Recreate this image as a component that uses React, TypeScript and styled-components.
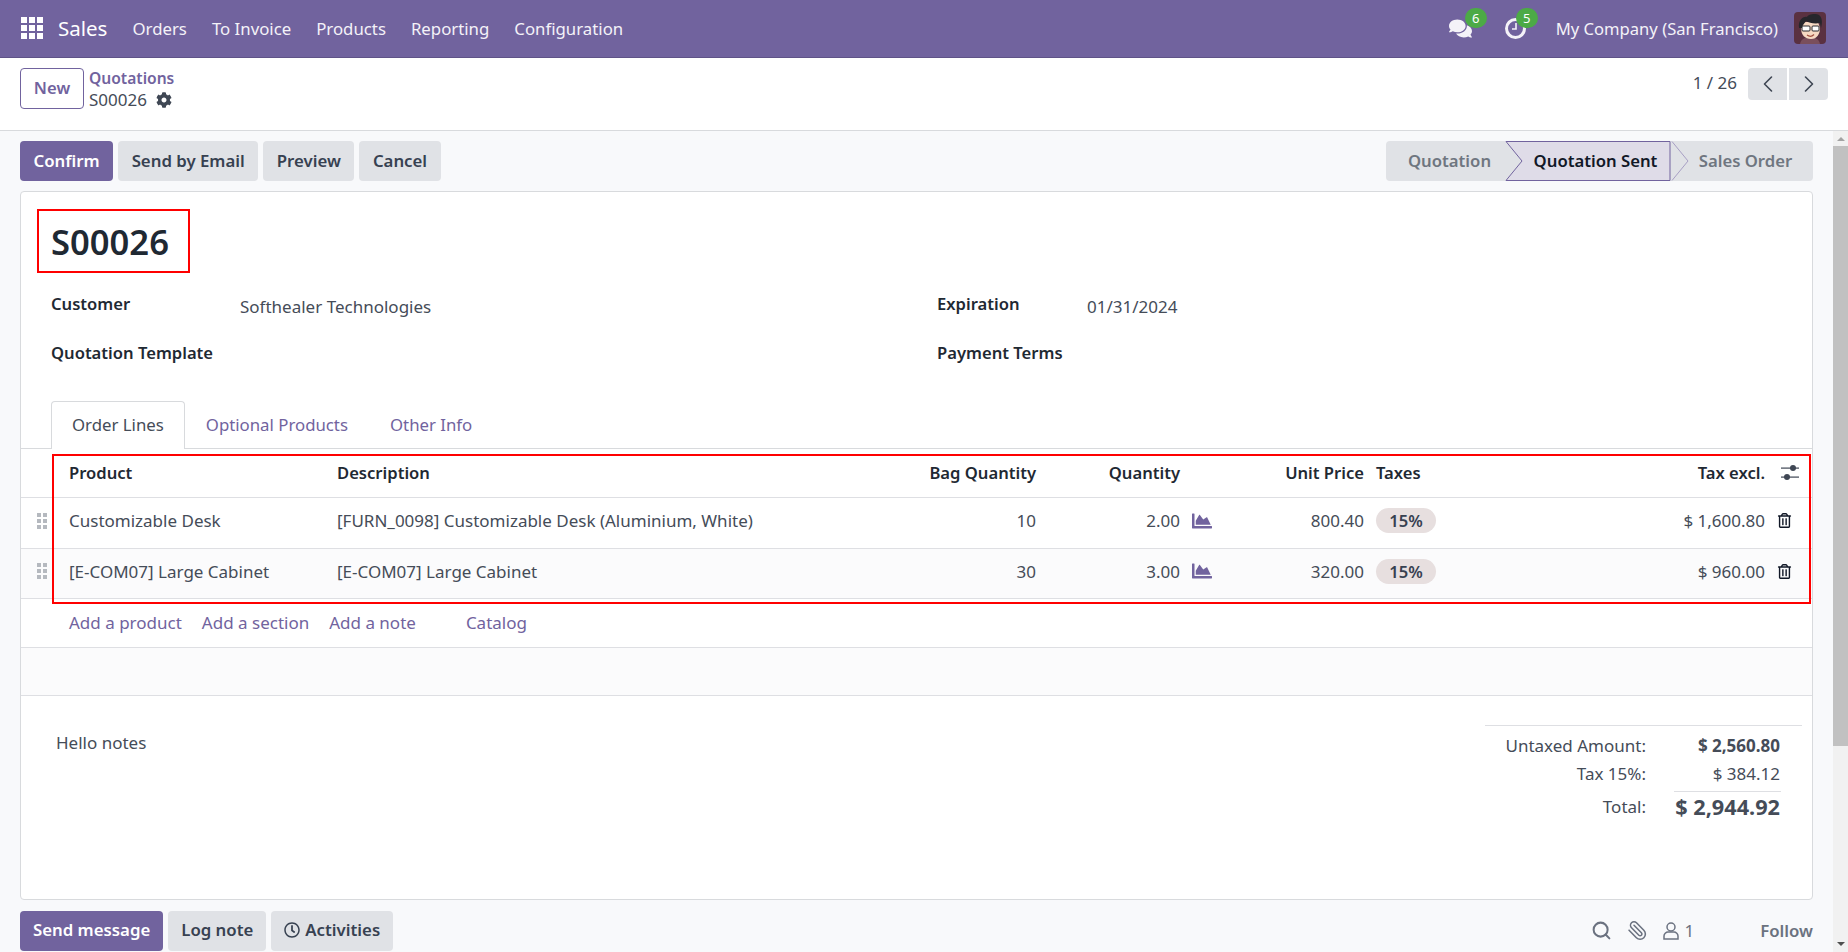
import React from 'react'
import styled, { createGlobalStyle } from 'styled-components'
import { FaChartArea, FaCog, FaComments, FaRegClock, FaRegTrashAlt } from 'react-icons/fa'
import { ChevronLeft, ChevronRight, Paperclip, Search } from 'lucide-react'

const font = `"Noto Sans", "Open Sans", sans-serif`

const GlobalStyle = createGlobalStyle`
  html, body { margin: 0; padding: 0; height: 100%; overflow: hidden; }
  body { font-family: ${font}; font-size: 17px; color: #454c58; background: #f8f9fb; }
  * { box-sizing: border-box; }
`

const Page = styled.div`
  width: 1848px;
  height: 952px;
  display: flex;
  flex-direction: column;
  overflow: hidden;
`
const Navbar = styled.header`
  height: 58px;
  flex: none;
  background: #71639e;
  border-bottom: 1px solid #5f5387;
  color: #fff;
  display: flex;
  align-items: center;
  padding: 0 22px 1px 21px;
`
const AppsIcon = styled.svg`
  width: 22px;
  height: 22px;
  fill: #fff;
  margin-right: 15px;
`
const Brand = styled.span`
  font-size: 20.5px;
  margin-right: 25px;
`
const MenuItem = styled.span`
  font-size: 16.8px;
  margin-right: 25px;
  color: #f4f2f8;
`
const NavRight = styled.div`
  margin-left: auto;
  display: flex;
  align-items: center;
`
const NavIcon = styled.span<{ $gap: number }>`
  position: relative;
  display: flex;
  font-size: 23px;
  margin-right: ${({ $gap }) => $gap}px;
  color: #f4f2f8;
`
const Badge = styled.span<{ $left: number }>`
  position: absolute;
  top: -9px;
  left: ${({ $left }) => $left}px;
  width: 22px;
  height: 20px;
  border-radius: 10px;
  background: #4caa46;
  color: #fff;
  font-size: 13px;
  display: flex;
  align-items: center;
  justify-content: center;
`
const Company = styled.span`
  font-size: 16.6px;
  margin: 0 16px 0 0;
  color: #f4f2f8;
`
const Avatar = styled.svg`
  width: 32px;
  height: 32px;
  border-radius: 4px;
`

const ControlPanel = styled.div`
  height: 73px;
  flex: none;
  background: #fff;
  border-bottom: 1px solid #d8dadd;
  display: flex;
  padding: 10px 20px 0;
`
const NewButton = styled.button`
  all: unset;
  box-sizing: border-box;
  width: 64px;
  height: 41px;
  padding-bottom: 3px;
  border: 1px solid #71639e;
  border-radius: 4px;
  color: #71639e;
  font-size: 16.6px;
  font-weight: 600;
  display: flex;
  align-items: center;
  justify-content: center;
`
const Breadcrumb = styled.div`
  margin-left: 5px;
  display: flex;
  flex-direction: column;
  line-height: 21px;
`
const CrumbLink = styled.span`
  color: #71639e;
  font-size: 15.6px;
  font-weight: 600;
`
const CrumbCurrent = styled.span`
  display: flex;
  align-items: center;
  gap: 9px;
  svg { font-size: 16px; color: #3f4754; }
`
const Pager = styled.div`
  margin-left: auto;
  display: flex;
  align-items: flex-start;
`
const PagerText = styled.span`
  line-height: 29px;
  margin-right: 11px;
`
const PagerButton = styled.button<{ $side: 'left' | 'right' }>`
  all: unset;
  width: 39px;
  height: 32px;
  background: #e0e2e6;
  color: #3f4754;
  display: flex;
  align-items: center;
  justify-content: center;
  margin-left: ${({ $side }) => ($side === 'right' ? '2px' : '0')};
  border-radius: ${({ $side }) => ($side === 'left' ? '4px 0 0 4px' : '0 4px 4px 0')};
`

const Workspace = styled.div`
  flex: 1;
  display: flex;
  min-height: 0;
`
const Content = styled.main`
  flex: 1;
  padding: 10px 20px 0;
  min-width: 0;
`
const ActionBar = styled.div`
  display: flex;
  gap: 5px;
  height: 40px;
`
const Btn = styled.button<{ $primary?: boolean }>`
  all: unset;
  box-sizing: border-box;
  height: 40px;
  padding: 0 13.5px 2px;
  border-radius: 4px;
  font-size: 16.8px;
  font-weight: 600;
  display: flex;
  align-items: center;
  gap: 5px;
  background: ${({ $primary }) => ($primary ? '#71639e' : '#e0e2e6')};
  color: ${({ $primary }) => ($primary ? '#fff' : '#374151')};
`
const ChatterBtn = styled(Btn)`
  padding: 0 13px 2px;
`
const StatusBar = styled.div`
  margin-left: auto;
  width: 427px;
  height: 40px;
  background: #e0e2e6;
  border-radius: 4px;
  display: grid;
  grid-template-columns: 119px 165px 1fr;
  position: relative;
  font-size: 16.7px;
  font-weight: 600;
  color: #6f7680;
`
const StatusStep = styled.span<{ $pad: number; $active?: boolean }>`
  position: relative;
  display: flex;
  align-items: center;
  justify-content: center;
  padding: 0 0 2px ${({ $pad }) => $pad}px;
  color: ${({ $active }) => ($active ? '#111827' : 'inherit')};
`
const StatusShape = styled.svg`
  position: absolute;
  left: 119px;
  top: 0;
  width: 184px;
  height: 40px;
`

const Sheet = styled.section`
  margin-top: 10px;
  height: 709px;
  background: #fff;
  border: 1px solid #d8dadd;
  border-radius: 4px;
  padding-top: 17px;
`
const TitleBox = styled.div`
  margin-left: 16px;
  width: 153px;
  height: 64px;
  border: 2px solid #f00;
  padding-left: 12px;
  display: flex;
  align-items: center;
  font-size: 34.6px;
  font-weight: 600;
  color: #1f2933;
`
const FormGrid = styled.div`
  display: grid;
  grid-template-columns: 189px 697px 150px 1fr;
  grid-auto-rows: 49px;
  margin: 8px 0 0 30px;
`
const FieldLabel = styled.span`
  font-size: 16.6px;
  font-weight: 600;
  color: #1f2933;
  padding-top: 11px;
`
const FieldValue = styled.span`
  padding-top: 14px;
`
const Tabs = styled.div`
  margin-top: 22px;
  height: 48px;
  padding-left: 30px;
  border-bottom: 1px solid #d8dadd;
  display: flex;
`
const Tab = styled.span<{ $active?: boolean }>`
  height: ${({ $active }) => ($active ? '48px' : '47px')};
  padding: 0 20px 2px;
  font-size: 16.8px;
  display: flex;
  align-items: center;
  color: ${({ $active }) => ($active ? '#454c58' : '#71639e')};
  background: #fff;
  border: 1px solid ${({ $active }) => ($active ? '#d8dadd' : 'transparent')};
  border-bottom: none;
  border-radius: 4px 4px 0 0;
`
const TableWrap = styled.div`
  position: relative;
`
const RedBox = styled.div`
  position: absolute;
  left: 31px;
  right: 1px;
  top: 5px;
  height: 150px;
  border: 2px solid #f00;
  pointer-events: none;
`
const Row = styled.div<{ $height: number; $shade?: boolean; $head?: boolean }>`
  display: grid;
  grid-template-columns: 48px 268px 549px 150px 144px 44px 140px 12px 224px 165px 1fr;
  height: ${({ $height }) => $height}px;
  align-items: center;
  padding-bottom: ${({ $head }) => ($head ? 1 : 5)}px;
  border-bottom: 1px solid #dedfe3;
  background: ${({ $shade }) => ($shade ? '#fbfbfc' : '#fff')};
`
const HeadCell = styled.span<{ $right?: boolean }>`
  font-size: 16.6px;
  font-weight: 600;
  color: #1f2933;
  text-align: ${({ $right }) => ($right ? 'right' : 'left')};
`
const Cell = styled.span<{ $right?: boolean }>`
  text-align: ${({ $right }) => ($right ? 'right' : 'left')};
  white-space: nowrap;
`
const HandleIcon = styled.svg`
  width: 10px;
  height: 16px;
  margin-left: 16px;
  fill: #b5b9bf;
`
const IconCell = styled.span`
  display: flex;
  color: #71639e;
  font-size: 20px;
  padding-left: 12px;
`
const Pill = styled.span`
  width: 60px;
  height: 25px;
  border-radius: 13px;
  background: #e7dfdf;
  font-size: 16.6px;
  font-weight: 600;
  display: flex;
  align-items: center;
  justify-content: center;
  color: #374151;
`
const EndIcon = styled.span`
  display: flex;
  padding-left: 12px;
  font-size: 15px;
  color: #111827;
`
const SlidersIcon = styled.svg`
  width: 18px;
  height: 17px;
  margin-left: 16px;
  fill: #3f4754;
`
const AddRow = styled.div`
  height: 49px;
  padding: 0 0 1px 48px;
  display: flex;
  align-items: center;
  gap: 20px;
  border-bottom: 1px solid #dedfe3;
  color: #71639e;
`
const AddLink = styled.span<{ $gap?: number }>`
  margin-left: ${({ $gap }) => $gap ?? 0}px;
`
const Band = styled.div`
  height: 48px;
  background: #fbfbfc;
  border-bottom: 1px solid #dedfe3;
`
const Footer = styled.div`
  display: flex;
  justify-content: space-between;
`
const Notes = styled.p`
  margin: 35px 0 0 35px;
`
const Totals = styled.div`
  width: 317px;
  margin: 29px 10px 0 0;
  border-top: 1px solid #dedfe3;
  padding-top: 5px;
`
const TotalRow = styled.div`
  display: grid;
  grid-template-columns: 161px 134px;
  height: 28px;
  align-items: center;
  text-align: right;
`
const Amount = styled.span<{ $big?: boolean; $bold?: boolean }>`
  font-size: ${({ $big }) => ($big ? '21.7px' : 'inherit')};
  font-weight: ${({ $bold }) => ($bold ? 700 : 400)};
`
const TotalRule = styled.div`
  margin: 4px 0 0 189px;
  width: 107px;
  border-top: 1px solid #dedfe3;
`

const Chatter = styled.div`
  margin-top: 10px;
  height: 41px;
  display: flex;
  align-items: center;
  gap: 5px;
`
const ChatterTools = styled.div`
  margin-left: auto;
  display: flex;
  align-items: center;
  color: #6b7280;
`
const ToolIcon = styled.span<{ $gap: number; $flip?: boolean }>`
  display: flex;
  margin-right: ${({ $gap }) => $gap}px;
  transform: ${({ $flip }) => ($flip ? 'scaleX(-1)' : 'none')};
`
const FollowText = styled.span`
  font-size: 16.8px;
  font-weight: 600;
  color: #6b7280;
  margin-left: 66px;
`
const Scrollbar = styled.div`
  width: 15px;
  flex: none;
  background: #f1f1f1;
  display: flex;
  flex-direction: column;
  align-items: center;
`
const Arrow = styled.span<{ $dir: 'up' | 'down' }>`
  width: 0;
  height: 0;
  border-left: 4px solid transparent;
  border-right: 4px solid transparent;
  ${({ $dir }) => ($dir === 'up' ? 'border-bottom: 4px solid #a3a3a3; margin: 6px 0 5px;' : 'border-top: 4px solid #505050; margin: auto 0 6px;')}
`
const Thumb = styled.div`
  width: 100%;
  height: 600px;
  background: #c1c1c1;
`

const rows = [
  { product: 'Customizable Desk', desc: '[FURN_0098] Customizable Desk (Aluminium, White)', bag: '10', qty: '2.00', price: '800.40', total: '$ 1,600.80', height: 51 },
  { product: '[E-COM07] Large Cabinet', desc: '[E-COM07] Large Cabinet', bag: '30', qty: '3.00', price: '320.00', total: '$ 960.00', height: 50, shade: true },
]

const Handle = () => (
  <HandleIcon viewBox="0 0 10 16">
    {[0, 6, 12].map((y) => (
      <React.Fragment key={y}>
        <rect x="0" y={y} width="4" height="4" />
        <rect x="6" y={y} width="4" height="4" />
      </React.Fragment>
    ))}
  </HandleIcon>
)

const App = () => {
  return (
    <Page>
      <GlobalStyle />
      <Navbar>
        <AppsIcon viewBox="0 0 22 22">
          {[0, 8, 16].map((y) =>
            [0, 8, 16].map((x) => <rect key={`${x}-${y}`} x={x} y={y} width="6" height="6" />),
          )}
        </AppsIcon>
        <Brand>Sales</Brand>
        <MenuItem>Orders</MenuItem>
        <MenuItem>To Invoice</MenuItem>
        <MenuItem>Products</MenuItem>
        <MenuItem>Reporting</MenuItem>
        <MenuItem>Configuration</MenuItem>
        <NavRight>
          <NavIcon $gap={32}><FaComments /><Badge $left={16}>6</Badge></NavIcon>
          <NavIcon $gap={29}>
            <svg width="23" height="23" viewBox="0 0 23 23" fill="none" stroke="currentColor">
              <circle cx="11.500" cy="11.500" r="9" strokeWidth="3" />
              <path d="M12 6v6H8" strokeWidth="1.600" />
            </svg>
            <Badge $left={12}>5</Badge>
          </NavIcon>
          <Company>My Company (San Francisco)</Company>
          <Avatar viewBox="0 0 32 32">
            <rect width="32" height="32" fill="#5a3140" />
            <path d="M6 32c1-5 5-7 10-7s9 2 10 7z" fill="#7a4f5c" />
            <path d="M7 16c0 7 4 11 10 11s9-5 9-11l-2-6H9z" fill="#f7d9c2" />
            <path d="M5 16C4 8 9 4 13 5c1-3 9-4 12-2 4 3 3 9 2 13l-1-5c-5 1-11 0-14-2-1 2-3 3-4 7z" fill="#26262b" />
            <rect x="8" y="14" width="8" height="5" rx="1" fill="#fff" stroke="#26262b" strokeWidth="1" />
            <rect x="18" y="14" width="7" height="5" rx="1" fill="#fff" stroke="#26262b" strokeWidth="1" />
            <path d="M13 23c2 1.500 5 1.500 7-.5" stroke="#a2503f" strokeWidth="1.200" fill="none" />
          </Avatar>
        </NavRight>
      </Navbar>
      <ControlPanel>
        <NewButton>New</NewButton>
        <Breadcrumb>
          <CrumbLink>Quotations</CrumbLink>
          <CrumbCurrent>S00026 <FaCog /></CrumbCurrent>
        </Breadcrumb>
        <Pager>
          <PagerText>1 / 26</PagerText>
          <PagerButton $side="left"><ChevronLeft size={28} strokeWidth={1.4} /></PagerButton>
          <PagerButton $side="right"><ChevronRight size={28} strokeWidth={1.4} /></PagerButton>
        </Pager>
      </ControlPanel>
      <Workspace>
        <Content>
          <ActionBar>
            <Btn $primary>Confirm</Btn>
            <Btn>Send by Email</Btn>
            <Btn>Preview</Btn>
            <Btn>Cancel</Btn>
            <StatusBar>
              <StatusShape viewBox="0 0 184 40">
                <path d="M1 0.500H165V39.500H1L17 20z" fill="#dfdce8" stroke="#71639e" />
                <path d="M167 0.500L183 20L167 39.500" fill="none" stroke="#a79fc4" />
              </StatusShape>
              <StatusStep $pad={8}>Quotation</StatusStep>
              <StatusStep $pad={16} $active>Quotation Sent</StatusStep>
              <StatusStep $pad={8}>Sales Order</StatusStep>
            </StatusBar>
          </ActionBar>
          <Sheet>
            <TitleBox>S00026</TitleBox>
            <FormGrid>
              <FieldLabel>Customer</FieldLabel>
              <FieldValue>Softhealer Technologies</FieldValue>
              <FieldLabel>Expiration</FieldLabel>
              <FieldValue>01/31/2024</FieldValue>
              <FieldLabel>Quotation Template</FieldLabel>
              <FieldValue />
              <FieldLabel>Payment Terms</FieldLabel>
              <FieldValue />
            </FormGrid>
            <Tabs>
              <Tab $active>Order Lines</Tab>
              <Tab>Optional Products</Tab>
              <Tab>Other Info</Tab>
            </Tabs>
            <TableWrap>
              <RedBox />
              <Row $height={49} $head>
                <span />
                <HeadCell>Product</HeadCell>
                <HeadCell>Description</HeadCell>
                <HeadCell $right>Bag Quantity</HeadCell>
                <HeadCell $right>Quantity</HeadCell>
                <span />
                <HeadCell $right>Unit Price</HeadCell>
                <span />
                <HeadCell>Taxes</HeadCell>
                <HeadCell $right>Tax excl.</HeadCell>
                <SlidersIcon viewBox="0 0 18 17">
                  <rect x="0" y="3.500" width="18" height="1.200" />
                  <circle cx="12" cy="4" r="3" />
                  <rect x="0" y="12.500" width="18" height="1.200" />
                  <circle cx="6" cy="13" r="3" />
                </SlidersIcon>
              </Row>
              {rows.map((r) => (
                <Row key={r.product} $height={r.height} $shade={r.shade}>
                  <Handle />
                  <Cell>{r.product}</Cell>
                  <Cell>{r.desc}</Cell>
                  <Cell $right>{r.bag}</Cell>
                  <Cell $right>{r.qty}</Cell>
                  <IconCell><FaChartArea /></IconCell>
                  <Cell $right>{r.price}</Cell>
                  <span />
                  <Pill>15%</Pill>
                  <Cell $right>{r.total}</Cell>
                  <EndIcon><FaRegTrashAlt /></EndIcon>
                </Row>
              ))}
              <AddRow>
                <AddLink>Add a product</AddLink>
                <AddLink>Add a section</AddLink>
                <AddLink>Add a note</AddLink>
                <AddLink $gap={30}>Catalog</AddLink>
              </AddRow>
              <Band />
            </TableWrap>
            <Footer>
              <Notes>Hello notes</Notes>
              <Totals>
                <TotalRow>
                  <span>Untaxed Amount:</span>
                  <Amount $bold>$ 2,560.80</Amount>
                </TotalRow>
                <TotalRow>
                  <span>Tax 15%:</span>
                  <Amount>$ 384.12</Amount>
                </TotalRow>
                <TotalRule />
                <TotalRow>
                  <span>Total:</span>
                  <Amount $big $bold>$ 2,944.92</Amount>
                </TotalRow>
              </Totals>
            </Footer>
          </Sheet>
          <Chatter>
            <ChatterBtn $primary>Send message</ChatterBtn>
            <ChatterBtn>Log note</ChatterBtn>
            <ChatterBtn><FaRegClock size={16} /> Activities</ChatterBtn>
            <ChatterTools>
              <ToolIcon $gap={15}><Search size={21} strokeWidth={2.300} /></ToolIcon>
              <ToolIcon $gap={15} $flip><Paperclip size={21} strokeWidth={1.800} /></ToolIcon>
              <ToolIcon $gap={5}>
                <svg width="16" height="18" viewBox="0 0 16 18" fill="none" stroke="currentColor" strokeWidth="1.500">
                  <circle cx="8" cy="5" r="4" />
                  <path d="M1 17v-3c0-2 2-4 4-4h6c2 0 4 2 4 4v3z" />
                </svg>
              </ToolIcon>
              <span>1</span>
              <FollowText>Follow</FollowText>
            </ChatterTools>
          </Chatter>
        </Content>
        <Scrollbar>
          <Arrow $dir="up" />
          <Thumb />
          <Arrow $dir="down" />
        </Scrollbar>
      </Workspace>
    </Page>
  )
}

export default App
